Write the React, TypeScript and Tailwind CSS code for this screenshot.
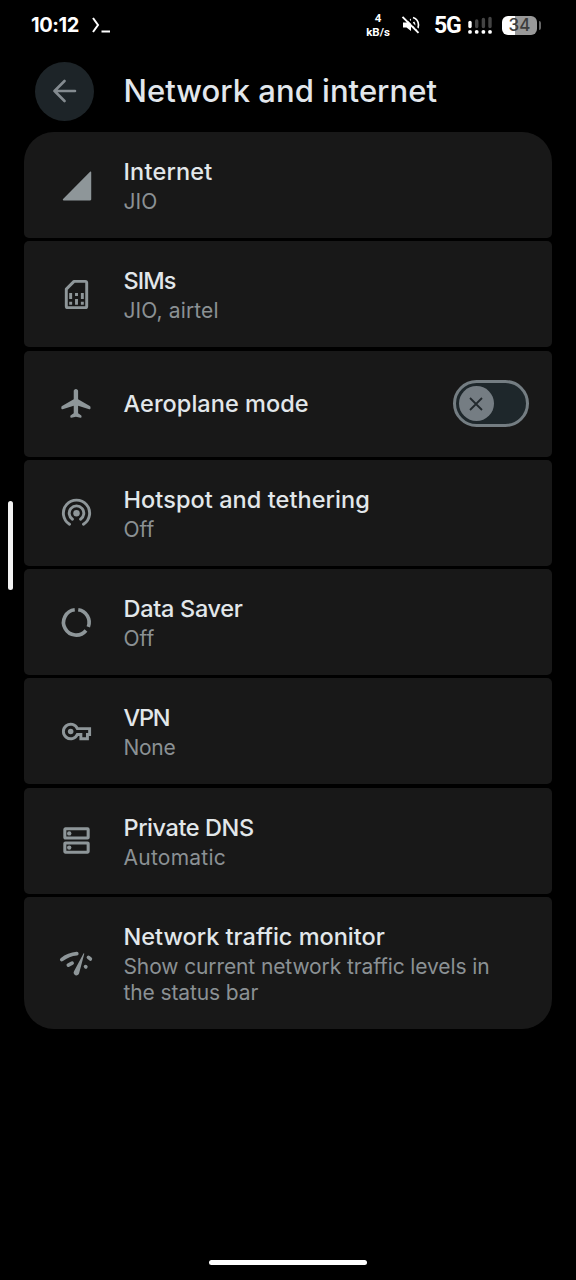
import type { ReactNode } from 'react';
import clsx from 'clsx';

interface SettingItemProps {
  title: string;
  titleClass?: string;
  summary?: string[];
  summaryClass?: string;
  icon: ReactNode;
  action?: ReactNode;
}

const Icon = ({ children }: { children: ReactNode }) => (
  <svg viewBox="0 0 24 24" className="size-[35px] shrink-0 text-[#8e9699]" fill="currentColor">
    {children}
  </svg>
);

const SignalIcon = () => (
  <Icon>
    <path d="M21.3 2.6c.4-.4.8-.2.8.3v18.600c0 .4-.3.700-.7.700H3.200c-.6 0-.8-.5-.4-.9z" />
  </Icon>
);

const SimIcon = () => (
  <Icon>
    <path
      d="M10.3 3H18a1 1 0 0 1 1 1v16a1 1 0 0 1-1 1H6a1 1 0 0 1-1-1V8.300z"
      fill="none"
      stroke="currentColor"
      strokeWidth="2"
      strokeLinejoin="round"
    />
    <path d="M7 11h2v4H7zM7 17h2v2H7zM11 11h2v2h-2zM11 15h2v4h-2zM15 11h2v4h-2zM15 17h2v2h-2z" />
  </Icon>
);

const PlaneIcon = () => (
  <Icon>
    <path d="M11.600 2c-.9 0-1.500.7-1.500 1.500V9L2.100 13.700a1 1 0 0 0-.5.9v.6c0 .5.4.8.9.7l7.600-2.400V18.700l-2 1.400a.8.8 0 0 0-.35.65v.5c0 .4.35.65.75.55L11.600 21l3.100.8c.4.1.75-.15.75-.55v-.5a.8.8 0 0 0-.35-.65l-2-1.400V13.500l7.600 2.400c.5.1.9-.2.9-.7v-.6a1 1 0 0 0-.5-.9L13.100 9V3.500C13.100 2.700 12.500 2 11.600 2z" />
  </Icon>
);

const HotspotIcon = () => (
  <Icon>
    <circle cx="12" cy="12.500" r="2.200" />
    <g fill="none" stroke="currentColor" strokeWidth="2" strokeLinecap="round">
      <path d="M9.200 16.600a5 5 0 1 1 5.600 0" />
      <path d="M7.200 20.100a9 9 0 1 1 9.600 0" />
    </g>
  </Icon>
);

const DataSaverIcon = () => (
  <Icon>
    <g fill="none" stroke="currentColor" strokeWidth="2.500">
      <path d="M13.200 3.300A8.700 8.700 0 0 1 20.100 15" />
      <path d="M18.500 17.500A8.700 8.700 0 1 1 10.800 3.300" />
    </g>
  </Icon>
);

const KeyIcon = () => (
  <Icon>
    <path
      d="M12.600 10A5 5 0 1 0 12.600 14H15v3h4.500v-3H21v-4z"
      fill="none"
      stroke="currentColor"
      strokeWidth="2"
    />
    <circle cx="8" cy="12" r="1.900" />
  </Icon>
);

const DnsIcon = () => (
  <Icon>
    <g fill="none" stroke="currentColor" strokeWidth="2.100">
      <rect x="4" y="4" width="16" height="6.300" rx=".4" />
      <rect x="4" y="13.700" width="16" height="6.300" rx=".4" />
    </g>
    <circle cx="7" cy="7.150" r="1.500" />
    <circle cx="7" cy="16.850" r="1.500" />
  </Icon>
);

const TrafficIcon = () => (
  <Icon>
    <g fill="none" stroke="currentColor" strokeWidth="2.500" strokeLinecap="round">
      <path d="M1.900 9.300Q6.500 5.700 12.200 5.200" />
      <path d="M6.400 13.100L9 11.700" />
      <path d="M20.200 7.800L21.500 8.900" />
      <path d="M18.200 14.100L18.400 14.300" />
    </g>
    <path d="M16.700 5.300c.2-.5.8-.3.600.2L13.800 18.600a1.900 1.900 0 1 1-3.500-1.300z" />
  </Icon>
);

const AeroplaneSwitch = () => (
  <button
    role="switch"
    aria-checked="false"
    aria-label="Aeroplane mode"
    className="flex h-[47px] w-[76px] items-center rounded-full border-[3px] border-[#747d82] bg-[#1e272b] pl-[2.5px]"
  >
    <span className="flex size-[35px] items-center justify-center rounded-full bg-[#757d83]">
      <svg viewBox="0 0 14 14" className="size-3.5" stroke="#22292d" strokeWidth="1.800">
        <path d="M1 1L13 13M13 1L1 13" />
      </svg>
    </span>
  </button>
);

const items: SettingItemProps[] = [
  { title: 'Internet', titleClass: 'tracking-[0.2px]', summary: ['JIO'], icon: <SignalIcon /> },
  {
    title: 'SIMs',
    titleClass: 'tracking-[-0.9px]',
    summary: ['JIO, airtel'],
    summaryClass: 'tracking-[0.12px]',
    icon: <SimIcon />,
  },
  {
    title: 'Aeroplane mode',
    titleClass: 'tracking-[0.05px]',
    icon: <PlaneIcon />,
    action: <AeroplaneSwitch />,
  },
  {
    title: 'Hotspot and tethering',
    titleClass: 'tracking-[0.07px]',
    summary: ['Off'],
    icon: <HotspotIcon />,
  },
  { title: 'Data Saver', summary: ['Off'], icon: <DataSaverIcon /> },
  {
    title: 'VPN',
    titleClass: 'tracking-[-1.2px]',
    summary: ['None'],
    summaryClass: 'tracking-[-0.3px]',
    icon: <KeyIcon />,
  },
  {
    title: 'Private DNS',
    titleClass: 'tracking-[-0.42px]',
    summary: ['Automatic'],
    summaryClass: 'tracking-[0.25px]',
    icon: <DnsIcon />,
  },
  {
    title: 'Network traffic monitor',
    titleClass: 'tracking-[0px]',
    summary: ['Show current network traffic levels in', 'the status bar'],
    summaryClass: 'tracking-[-0.11px]',
    icon: <TrafficIcon />,
  },
];

const SettingItem = ({ title, titleClass, summary, summaryClass, icon, action }: SettingItemProps) => (
  <li
    className={clsx(
      'flex items-center rounded-[5px] bg-[#181818] pr-[23px] pl-[35px] first:rounded-t-[30px] last:rounded-b-[30px]',
      summary && summary.length > 1 ? 'h-[132px]' : 'h-[106px]',
    )}
  >
    {icon}
    <div className={clsx('ml-[29.5px] flex-1 whitespace-nowrap', summary && 'pt-px')}>
      <h2 className={clsx('text-[23.5px] leading-[32px] font-medium text-[#e2e7ea]', titleClass ?? 'tracking-[-0.3px]')}>
        {title}
      </h2>
      {summary?.map((line) => (
        <p
          key={line}
          className={clsx('text-[21px] leading-[26px] text-[#8b9194] first-of-type:mt-px', summaryClass)}
        >
          {line}
        </p>
      ))}
    </div>
    {action}
  </li>
);

const StatusBar = () => (
  <div className="flex h-[50px] items-center pr-[35px] pl-[31px] text-white">
    <span className="text-[20px] font-bold tracking-[-0.4px]">10:12</span>
    <svg viewBox="0 0 20 16" className="ml-[13px] h-4 w-5" fill="none" stroke="currentColor" strokeWidth="2">
      <path d="M1 1L6 8L1 15M9.500 14.500H18" />
    </svg>
    <div className="ml-auto flex items-center">
      <div className="mr-px w-6 text-center font-[Roboto] text-[11.5px] leading-[14px] font-bold">
        <div>4</div>
        <div>kB/s</div>
      </div>
      <svg viewBox="0 0 20 20" className="ml-[10px] size-5" fill="currentColor">
        <path d="M2 7.500h3.500l4.500-4v12.500l-4.500-3.500H2z" />
        <g fill="none" stroke="currentColor" strokeWidth="1.700">
          <path d="M12.500 7Q14.500 9.500 12.500 12.500" />
          <path d="M12 2.500Q17.500 4.500 17.500 10Q17.500 13 15.500 15" />
        </g>
        <path d="M3 .5L19 16.500" stroke="#000" strokeWidth="2" />
        <path d="M1.500 1.800L17.500 17.800" stroke="currentColor" strokeWidth="1.900" />
      </svg>
      <span className="ml-[13px] w-[26px] pt-[2px] font-[Roboto] text-[23px] leading-[26px] font-bold tracking-[-1.2px]">
        5G
      </span>
      <svg viewBox="0 0 26 20" className="ml-[7px] h-5 w-[26px]" strokeWidth="3.400" strokeLinecap="round">
        <path d="M3 7.500V11.500" stroke="#fff" />
        <path d="M9.700 6V11.500M16.400 4.500V11.500M23 3.500V11.500" stroke="#444" />
        <path d="M3 16.800V16.900M9.700 16.800V16.900M16.400 16.800V16.900M23 16.800V16.900" stroke="#fff" strokeWidth="3.800" />
      </svg>
      <div className="ml-[9px] flex h-[19px] w-[35px] items-center justify-center rounded-[6px] bg-linear-to-r from-white from-37% to-[#999] to-37%">
        <span className="pt-px text-[17px] leading-[19px] font-medium text-[#3c3c3c]">34</span>
      </div>
      <span className="ml-[2px] h-[9px] w-[2px] rounded-r-full bg-[#666]" />
    </div>
  </div>
);

export default function App() {
  return (
    <div className="relative flex h-[1280px] w-[576px] flex-col overflow-hidden bg-black font-[Inter,sans-serif]">
      <StatusBar />
      <header className="flex h-[82px] items-center pl-[35px]">
        <button aria-label="Back" className="flex size-[59px] items-center justify-center rounded-full bg-[#1d2428]">
          <svg
            viewBox="0 0 24 24"
            className="size-6"
            fill="none"
            stroke="#848b90"
            strokeWidth="2.600"
            strokeLinecap="round"
            strokeLinejoin="round"
          >
            <path d="M11.500 2L1.500 12L11.500 22M1.500 12H22" />
          </svg>
        </button>
        <h1 className="ml-[29.5px] text-[31px] font-medium tracking-[0.02px] text-[#e2e7ec]">Network and internet</h1>
      </header>
      <ul className="mx-6 flex flex-col gap-[3.3px]">
        {items.map((item) => (
          <SettingItem key={item.title} {...item} />
        ))}
      </ul>
      <div className="absolute top-[501px] left-[8px] h-[89px] w-[5px] rounded-full bg-[#f2f2f2]" />
      <div className="mx-auto mt-auto mb-[15px] h-[5px] w-[158px] rounded-full bg-white" />
    </div>
  );
}
